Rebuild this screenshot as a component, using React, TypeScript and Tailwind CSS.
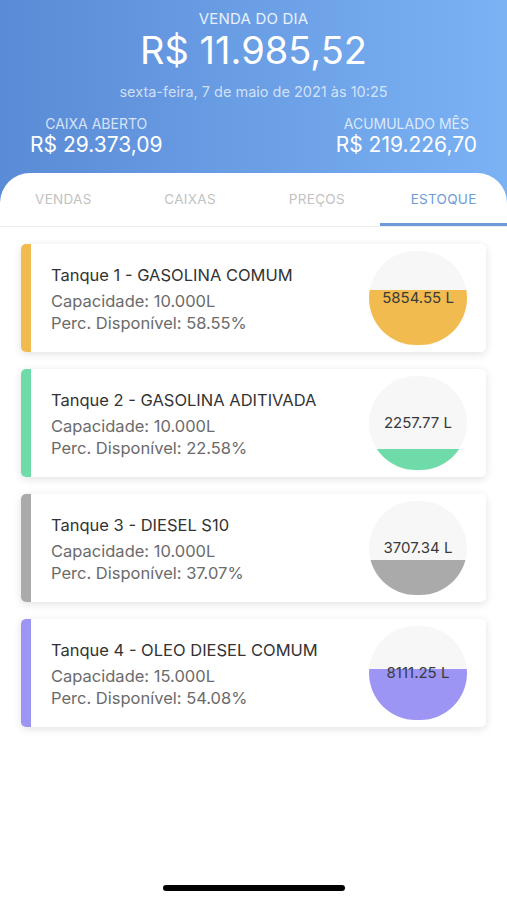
import React from 'react';

type Tank = {
  id: number;
  name: string;
  capacity: string;
  pct: number;
  liters: string;
  color: string;
};

const tanks: Tank[] = [
  { id: 1, name: 'Tanque 1 - GASOLINA COMUM', capacity: '10.000L', pct: 58.55, liters: '5854.55 L', color: 'bg-[#f2bb4f]' },
  { id: 2, name: 'Tanque 2 - GASOLINA ADITIVADA', capacity: '10.000L', pct: 22.58, liters: '2257.77 L', color: 'bg-[#6fdba8]' },
  { id: 3, name: 'Tanque 3 - DIESEL S10', capacity: '10.000L', pct: 37.07, liters: '3707.34 L', color: 'bg-[#aaaaaa]' },
  { id: 4, name: 'Tanque 4 - OLEO DIESEL COMUM', capacity: '15.000L', pct: 54.08, liters: '8111.25 L', color: 'bg-[#9d95f3]' },
];

const tabs = ['VENDAS', 'CAIXAS', 'PREÇOS', 'ESTOQUE'];

// circular level gauge, fill height comes from the data
const Gauge: React.FC<{ tank: Tank }> = ({ tank }) => (
  <div className="relative w-[98px] h-[94px] rounded-full bg-[#f7f7f7] overflow-hidden shrink-0">
    <div className={`absolute bottom-0 left-0 right-0 ${tank.color}`} style={{ height: `${tank.pct}%` }} />
    <div className="absolute inset-0 flex items-center justify-center text-[15px] text-[#3a3a3a]">
      {tank.liters}
    </div>
  </div>
);

const App: React.FC = () => {
  return (
    <div className="w-full h-[900px] flex flex-col bg-gradient-to-r from-[#5a8bd6] to-[#7bb2f4] font-['Inter','Liberation_Sans',sans-serif] overflow-hidden">
      {/* Header */}
      <div className="flex flex-col items-center text-white pt-[9px]">
        <div className="text-[15px] leading-[20px] tracking-[0.2px] text-white/85">VENDA DO DIA</div>
        <div className="text-[38px] leading-[42px]">R$ 11.985,52</div>
        <div className="text-[14.5px] leading-[18px] mt-[12px] text-white/70">sexta-feira, 7 de maio de 2021 às 10:25</div>
      </div>
      <div className="flex justify-between px-[30px] mt-[15px] text-white">
        <div className="flex flex-col items-center">
          <div className="text-[14px] leading-[16px] text-white/75">CAIXA ABERTO</div>
          <div className="text-[21px] leading-[24px] mt-[1px]">R$ 29.373,09</div>
        </div>
        <div className="flex flex-col items-center">
          <div className="text-[14px] leading-[16px] text-white/75">ACUMULADO MÊS</div>
          <div className="text-[21px] leading-[24px] mt-[1px]">R$ 219.226,70</div>
        </div>
      </div>

      {/* Panel */}
      <div className="flex-1 flex flex-col bg-white rounded-t-[30px] mt-[16px]">
        <div className="flex border-b border-[#ececec]">
          {tabs.map((t) => (
            <div
              key={t}
              className={`flex-1 flex items-center justify-center h-[53px] pt-[3px] text-[13.5px] tracking-[0.3px] border-b-[3px] ${
                t === 'ESTOQUE' ? 'text-[#6b9bd9] border-[#6b9bd9]' : 'text-[#c2c2c2] border-transparent'
              }`}
            >
              {t}
            </div>
          ))}
        </div>

        <div className="flex flex-col gap-[17px] px-[21px] pt-[17px]">
          {tanks.map((tank) => (
            <div key={tank.id} className="flex h-[108px] bg-white rounded-[5px] shadow-[0_2px_8px_rgba(0,0,0,0.12)] overflow-hidden">
              <div className={`w-[10px] ${tank.color}`} />
              <div className="flex-1 flex items-center justify-between pl-[20px] pr-[19px]">
                <div className="flex flex-col pt-[2px]">
                  <div className="text-[16.5px] leading-[22px] text-[#333333]">{tank.name}</div>
                  <div className="text-[16.5px] leading-[22px] text-[#6b6b6b] mt-[4px]">Capacidade: {tank.capacity}</div>
                  <div className="text-[16.5px] leading-[22px] text-[#6b6b6b]">Perc. Disponível: {tank.pct.toFixed(2)}%</div>
                </div>
                <Gauge tank={tank} />
              </div>
            </div>
          ))}
        </div>

        <div className="flex-1" />
        <div className="flex justify-center pb-[9px]">
          <div className="w-[182px] h-[6px] rounded-full bg-black" />
        </div>
      </div>
    </div>
  );
};

export default App;
